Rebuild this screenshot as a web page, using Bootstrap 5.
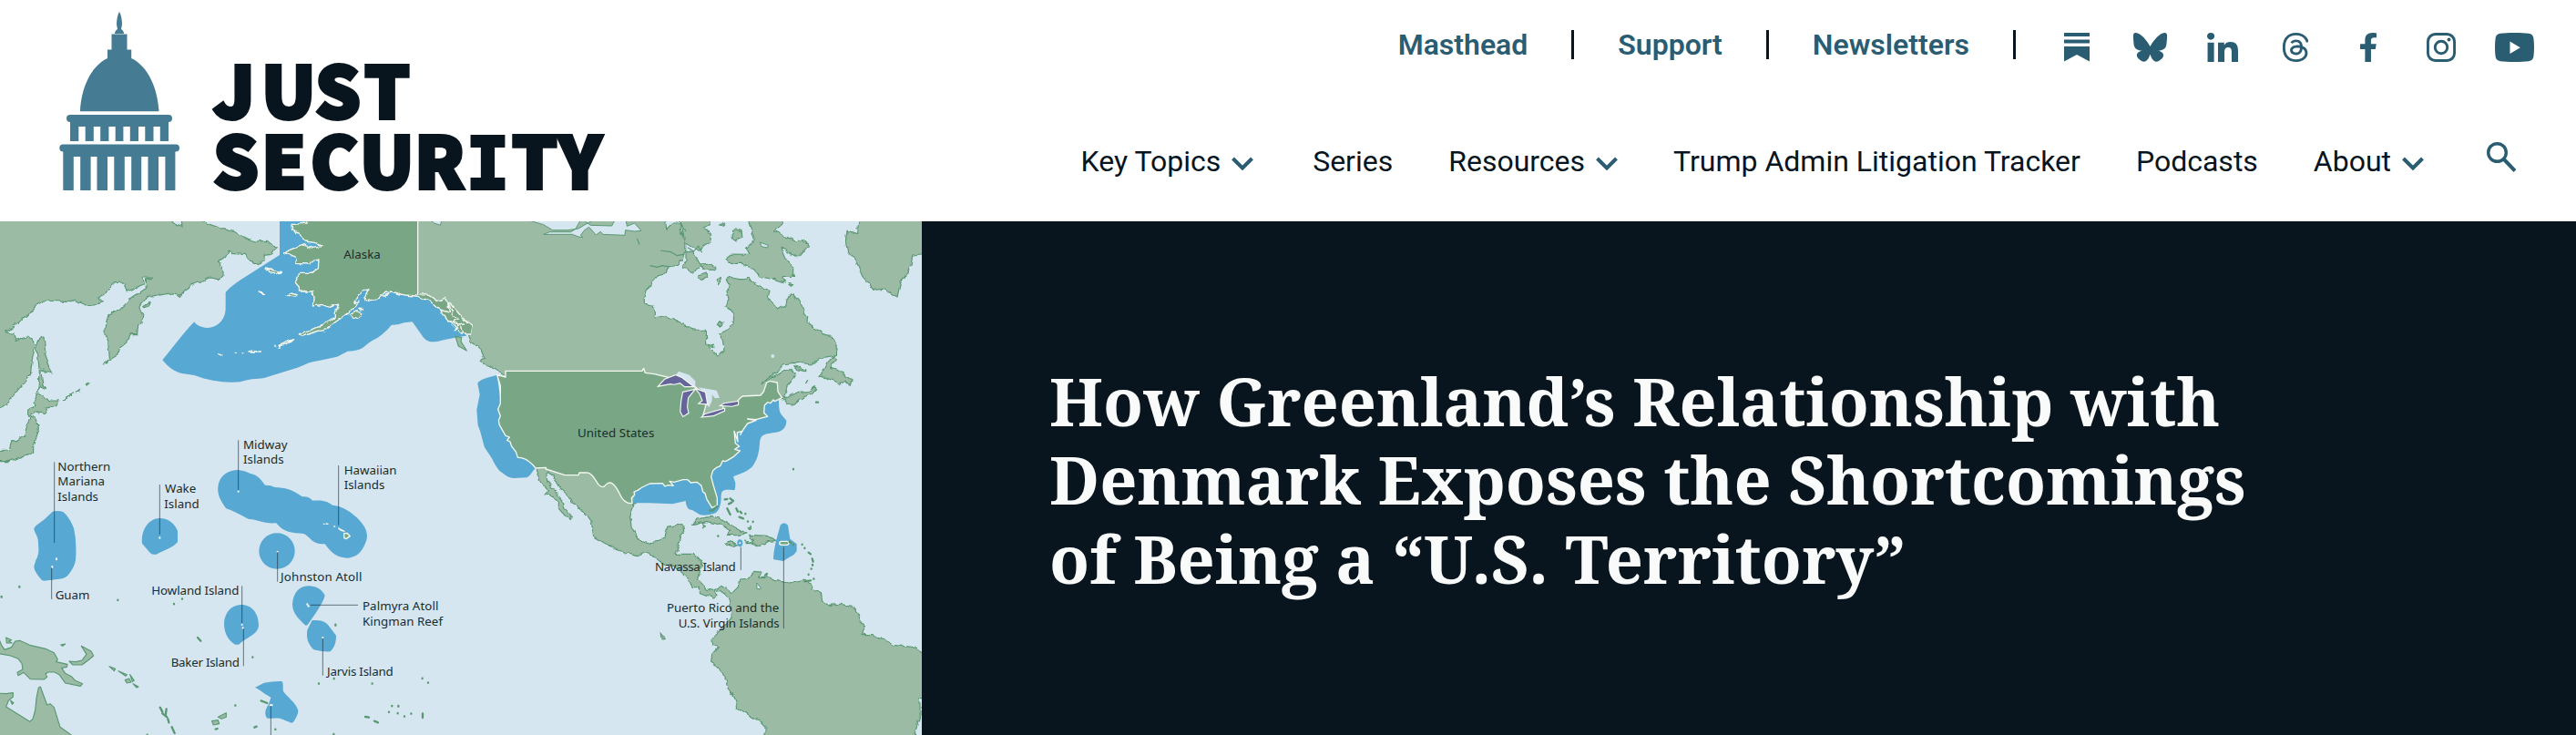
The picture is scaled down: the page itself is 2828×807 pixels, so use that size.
<!DOCTYPE html>
<html lang="en">

<head>
  <meta charset="UTF-8" />
  <meta name="viewport" content="width=device-width, initial-scale=1.0" />
  <title>Just Security</title>
  <link href="https://cdn.jsdelivr.net/npm/bootstrap@5.3.0/dist/css/bootstrap.min.css" rel="stylesheet" />
  <style>
    body {
      font-family: Roboto, "Liberation Sans", sans-serif;
      color: #08151e;
      background: #fff;
      overflow: hidden;
    }

    .site-header {
      height: 243px;
      padding-left: 65px;
    }

    .site-logo {
      width: 604px;
      height: 243px;
    }

    .logo-text {
      font-family: "Noto Sans CJK SC", "Noto Sans", sans-serif;
      font-size: 78px;
      font-weight: 900;
      fill: #08151e;
      stroke: #08151e;
      stroke-width: 4px;
    }

    .logo-slab {
      font-family: "DejaVu Sans Mono", monospace;
      font-weight: 700;
    }

    .top-links {
      height: 98px;
      padding-right: 28px;
      font-size: 32px;
      font-weight: 600;
      line-height: 1;
    }

    .top-links a {
      color: #2a5c72;
      text-decoration: none;
    }

    .divider {
      width: 3px;
      height: 32px;
      margin: 0 48px;
      background: #08151e;
    }

    .divider-last {
      margin-right: 27px;
    }

    .social-link {
      width: 80px;
      height: 32px;
      margin-top: 6px;
      display: flex;
      justify-content: center;
    }

    .social-link svg {
      height: 32px;
      fill: #2a5c72;
    }

    .main-menu {
      height: 145px;
      padding-top: 12px;
      padding-right: 66px;
      gap: 61px;
      font-size: 32px;
      line-height: 1;
    }

    .main-menu a {
      color: #08151e;
      text-decoration: none;
      white-space: nowrap;
    }

    .chevron {
      width: 24px;
      height: 15px;
      margin-left: 4px;
      fill: none;
      stroke: #2a5c72;
      stroke-width: 4;
    }

    .search-icon {
      width: 32px;
      height: 33px;
      margin-left: 8px;
      margin-bottom: 8px;
      fill: none;
      stroke: #2a5c72;
    }

    .hero {
      height: 564px;
      background: #08151e;
    }

    .hero-map {
      width: 1012px;
      height: 564px;
      flex: none;
    }

    .hero-title {
      margin: 3px 0 0 140px;
      color: #f9fbfa;
      font-family: "Noto Serif", "DejaVu Serif Condensed", "DejaVu Serif", serif;
      font-size: 72px;
      font-weight: 700;
      line-height: 86.4px;
      white-space: nowrap;
    }

    .land {
      fill: #9bbba5;
      stroke: #5a9873;
      stroke-width: 3.5;
      stroke-linejoin: round;
    }

    .speck {
      fill: none;
      stroke: #5a9873;
      stroke-width: 7;
      stroke-linecap: round;
    }

    .water {
      fill: #d6e6f0;
      stroke: #5a9873;
      stroke-width: 3;
    }

    .us {
      fill: #79a786;
      stroke: #f4f8f0;
      stroke-width: 4;
      stroke-linejoin: round;
    }

    .zone {
      fill: #57a8d2;
    }

    .lake {
      fill: #65659b;
      stroke: #f4f8f0;
      stroke-width: 7;
      paint-order: stroke;
    }

    .leader {
      fill: none;
      stroke: #17272e;
      stroke-opacity: .6;
      stroke-width: 3;
    }

    .map-label {
      font-family: "Noto Sans", sans-serif;
      font-size: 40px;
      fill: #202b2b;
    }
  </style>
</head>

<body>
  <header class="site-header d-flex justify-content-between">
    <a href="#" aria-label="Just Security">
      <svg class="site-logo d-block" viewBox="65 0 604 243">
        <g fill="#457c93">
          <path d="M131 13c2 3 3 9 3 14l-1 5c2 1 3 3 3 5h-10c0-2 1-4 3-5l-1-5c0-5 1-11 3-14zM122.500 37.500h17v17h4.700v9.500c19 9 29 34 30.300 58.300H88C89 98 99 73 118 64v-9.500h4.500z" />
          <path d="M77 126h108a4 4 0 0 1 0 8v21h-9.200v-16h-7.300v16h-9.200v-16H152v16h-9.200v-16h-7.400v16h-8.700v-16h-7.300v16h-9.200v-16h-7.400v16h-9.100v-16h-7.400v16H77v-21a4 4 0 0 1 0-8z" />
          <path d="M69 158.500h124a4 4 0 0 1 0 8h-.6V209h-11v-37H174v37h-11.500v-37h-7.300v37h-11v-37h-7.400v37h-11.500v-37H118v37h-11.500v-37h-6.900v37H88.200v-37h-7.400v37H69.300v-42.500a4 4 0 0 1 0-8z" />
        </g>
        <g class="logo-text">
          <text y="130" x="234 287 346 400">JUST</text>
          <text y="206.500" x="234 287 341 395 455">SECUR</text>
          <text class="logo-slab" y="206.500" x="512">I</text>
          <text y="206.500" x="562 613">TY</text>
        </g>
      </svg>
    </a>

    <div class="d-flex flex-column align-items-end">
      <div class="top-links d-flex align-items-center">
        <a href="#">Masthead</a>
        <span class="divider"></span>
        <a href="#">Support</a>
        <span class="divider"></span>
        <a href="#">Newsletters</a>
        <span class="divider divider-last"></span>
        <a class="social-link" href="#" aria-label="Substack">
          <svg width="28" viewBox="0 0 28 32"><path d="M0 0h28v4H0zM0 7.500h28v4H0zM0 15h28v16.500L14 24 0 31.500z" /></svg>
        </a>
        <a class="social-link" href="#" aria-label="Bluesky">
          <svg width="37" viewBox="0 0 576 512" preserveAspectRatio="none"><path d="M123.600 34.500C190.200 84.200 261.800 185 288 239.100c26.200-54.100 97.800-154.900 164.400-204.600 48-35.900 125.900-63.600 125.900 24.700 0 17.600-10.200 148.200-16.200 169.400-20.700 73.600-96.200 92.400-163.300 81 117.300 19.900 147.200 85.700 82.700 151.500-122.400 125-175.900-31.400-189.600-71.500-3.300-9.700-3.600-9.600-3.900 0-.3-9.600-.6-9.700-3.900 0-13.700 40.100-67.200 196.500-189.600 71.500-64.500-65.800-34.600-131.600 82.700-151.500-67.100 11.400-142.600-7.400-163.300-81C7.900 207.400-2.300 76.800-2.300 59.200c0-88.300 77.900-60.600 125.900-24.700z" /></svg>
        </a>
        <a class="social-link" href="#" aria-label="LinkedIn">
          <svg width="34" viewBox="0 0 448 448" preserveAspectRatio="none"><path d="M100.300 448H7.400V148.900h92.900zM53.800 108.100C24.100 108.100 0 83.500 0 53.800a53.800 53.800 0 0 1 107.600 0c0 29.700-24.100 54.300-53.800 54.300zM447.900 448h-92.700V302.400c0-34.700-.7-79.200-48.300-79.200-48.300 0-55.700 37.700-55.700 76.700V448h-92.800V148.900h89.100v40.800h1.300c12.400-23.500 42.700-48.300 87.900-48.300 94 0 111.300 61.900 111.300 142.300V448z" /></svg>
        </a>
        <a class="social-link" href="#" aria-label="Threads">
          <svg width="28" viewBox="18 16 400 480" preserveAspectRatio="none"><path d="M331.500 235.700c2.200.9 4.200 1.900 6.300 2.800 29.200 14.100 50.600 35.200 61.800 61.400 15.700 36.500 17.200 95.800-30.300 143.200-36.200 36.200-80.300 52.500-142.600 53h-.3c-70.200-.5-124.100-24.100-160.400-70.200-32.300-41-48.900-98.100-49.500-169.600v-.5c.5-71.500 17.100-128.600 49.400-169.600C102.200 40.100 156.200 16.500 226.400 16h.3c70.300.5 124.900 24 162.300 69.900 18.400 22.700 32 50 40.600 81.700l-40.400 10.800c-7.100-25.800-17.800-47.800-32.200-65.400-29.200-35.800-73-54.200-130.500-54.600-57 .5-100.100 18.800-128.200 54.400C72.100 146.100 58.500 194.300 58 256c.5 61.700 14.100 109.900 40.300 143.300 28 35.600 71.200 53.900 128.200 54.400 51.400-.4 85.400-12.600 113.700-40.900 32.300-32.200 31.700-71.800 21.400-95.900-6.100-14.200-17.100-26-31.900-34.900-3.700 26.900-11.800 48.300-24.700 64.800-17.100 21.800-41.400 33.600-72.700 35.300-23.600 1.300-46.300-4.400-63.900-16-20.800-13.800-33-34.800-34.300-59.300-2.500-48.300 35.700-83 95.200-86.400 21.100-1.200 40.900-.3 59.200 2.800-2.400-14.800-7.300-26.600-14.600-35.200-10-11.700-25.600-17.700-46.200-17.800h-.7c-16.600 0-39 4.600-53.300 26.300l-34.400-23.600c19.200-29.100 50.300-45.100 87.800-45.100h.8c62.600.4 99.900 39.500 103.700 107.700zm-156 68.800c1.300 25.100 28.400 36.800 54.600 35.300 25.600-1.400 54.600-11.400 59.500-73.200-13.200-2.900-27.800-4.400-43.400-4.400-4.800 0-9.600.1-14.400.4-42.900 2.400-57.200 23.200-56.200 41.800z" /></svg>
        </a>
        <a class="social-link" href="#" aria-label="Facebook">
          <svg width="18" viewBox="22 0 275 512" preserveAspectRatio="none"><path d="M279.100 288l14.200-92.700h-88.900v-60.100c0-25.300 12.400-50 52.200-50h40.400V6.300S260.400 0 225.400 0c-73.200 0-121 44.400-121 124.700v70.600H22.900V288h81.500v224h100.200V288z" /></svg>
        </a>
        <a class="social-link" href="#" aria-label="Instagram">
          <svg width="32" viewBox="0 0 32 32"><path fill-rule="evenodd" d="M9.500 0h13A9.500 9.500 0 0 1 32 9.500v13a9.500 9.500 0 0 1-9.500 9.500h-13A9.500 9.500 0 0 1 0 22.500v-13A9.500 9.500 0 0 1 9.500 0zm.3 2.900a6.900 6.900 0 0 0-6.900 6.900v12.400a6.900 6.900 0 0 0 6.900 6.900h12.400a6.900 6.900 0 0 0 6.900-6.900V9.800a6.900 6.900 0 0 0-6.900-6.900zM16 7.800a8.200 8.200 0 1 1 0 16.400 8.200 8.200 0 0 1 0-16.400zm0 2.900a5.300 5.300 0 1 0 0 10.600 5.300 5.300 0 0 0 0-10.600z" /><circle cx="24.500" cy="7.500" r="1.900" /></svg>
        </a>
        <a class="social-link" href="#" aria-label="YouTube">
          <svg width="43" viewBox="0 0 43 32"><path fill-rule="evenodd" d="M6 .8C13-.2 30-.2 37 .8c3.500.5 5 2.200 5.400 5.200.8 6 .8 14 0 20-.4 3-1.900 4.700-5.400 5.200-7 1-24 1-31 0C2.500 30.700 1 29 .6 26c-.8-6-.8-14 0-20C1 3 2.500 1.300 6 .8zM16.500 9.500v13.500l11.300-6.700z" /></svg>
        </a>
      </div>

      <nav class="main-menu d-flex align-items-center">
        <a class="me-1" href="#">Key Topics <svg class="chevron" viewBox="0 0 24 15"><path d="M1.500 2 12 12.500 22.500 2" /></svg></a>
        <a href="#">Series</a>
        <a href="#">Resources <svg class="chevron" viewBox="0 0 24 15"><path d="M1.500 2 12 12.500 22.500 2" /></svg></a>
        <a href="#">Trump Admin Litigation Tracker</a>
        <a href="#">Podcasts</a>
        <a href="#">About <svg class="chevron" viewBox="0 0 24 15"><path d="M1.500 2 12 12.500 22.500 2" /></svg></a>
        <svg class="search-icon" viewBox="0 0 32 33"><circle cx="11.500" cy="11.500" r="9.800" stroke-width="3.400" /><path d="M18.500 18.500 31 31.500" stroke-width="4" /></svg>
      </nav>
    </div>
  </header>

  <main class="hero d-flex align-items-center">
    <svg class="hero-map" viewBox="0 9 3036 1692">
      <defs>
        <!-- breaks up the coastlines a little -->
        <filter id="coast" filterUnits="userSpaceOnUse" x="-30" y="-30" width="3100" height="1780">
          <feTurbulence type="fractalNoise" baseFrequency=".045" numOctaves="2" seed="4" />
          <feDisplacementMap in="SourceGraphic" scale="16" xChannelSelector="R" yChannelSelector="G" />
        </filter>
      </defs>
      <rect y="9" width="3036" height="1692" fill="#d6e6f0" />

      <!-- Asia -->
      <g class="land" filter="url(#coast)">
        <path d="M-20-20H500L580 20 600 25 595-10H610L735 35 775 45 820 68 840 75 880 73 910 98 890 115 870 118 872 140 850 148 820 138 805 118 765 115 752 100 755 115 720 142 735 175 735 190 720 200 690 195 635 218 610 235 590 258 575 245 535 250 505 258 490 255 475 270 455 295 470 315 468 345 455 350 452 380 430 380 415 410 395 425 390 450 362 466 355 400 345 380 347 340 370 305 390 305 430 265 480 230 482 200 500 195 470 195 475 215 420 240 410 210 380 212 325 262 340 275 325 280 280 285 245 268 235 275 145 270 120 285 90 320 20 375 45 380 50 400 90 390 118 410 105 470 100 515 20 612-20 635z" />
        <path d="M133 385 145 395 150 450 172 510 135 500 140 540 152 560 135 550 125 570 130 500 125 450 118 430z" />
        <path d="M123 575 165 600 192 600 185 615 150 625 148 645 120 635 92 650 92 630 110 622z" />
        <path d="M100 650 120 660 127 690 110 745 110 770 30 800 0 800-20 765 30 762 40 730 50 735 80 715 90 680z" />
        <path d="M470 290 492 275 490 288 475 293zM340 480 358 465 352 477zM205 597 238 573 232 582zM247 573 266 560 262 570zM283 547 294 541 290 549z" />
      </g>

      <!-- New Guinea and Australia -->
      <g class="land" transform="translate(0 780)">
        <path d="M-10 590 5 625 15 640 38 632 50 612 65 610 98 625 150 637 178 650 190 672 185 680 222 688 220 697 203 700 215 718 235 728 248 742 272 752 265 760 215 750 195 722 180 714 158 714 150 720 155 730 145 738 100 737 78 715 60 725 57 715 75 705 72 685 60 670 35 660-10 652zM-10 783 20 785 43 782 43 795 28 808 20 828 98 877 108 868 116 840 120 800 127 765 133 762 155 822 165 818 178 830 198 895 240 925-10 925z" />
        <path d="M228 678 250 680 270 675 285 655 268 628 300 645 308 660 290 675 270 690 240 690zM20 600 38 608 28 612 40 618 22 618zM200 624 215 621 206 628zM360 695 380 703 376 710zM390 710 418 722 414 727zM412 740 425 735 432 747 418 750zM428 722 442 742 436 745zM438 752 456 762 450 765z" />
        <path d="M698 875 718 872 722 884 703 888zM718 862 745 848 745 862 730 868zM35 808 45 815 40 820z" />
        <path class="speck" d="M527 830 535 845M548 835 545 858M535 850 550 862M553 868 556 880M566 895 575 915M860 808 880 816M1203 861 1215 863M1233 875 1245 880M1392 850v14M1410 748v1M1391 734v1M838 896 845 893M907 902v1M710 902 716 900M1105 557v3M651 600 661 611" />
        <path class="speck" stroke-width="5" d="M64 432v2M5 465v2M388 476v1M573 489v1M600 472v1M832 664v1M1050 751v1M1100 735v1M1226 751v1M775 823v1M1291 825v1M1312 825v2M1281 845v1M1310 849v1M1332 859v1M1354 850v1M1099 918v1M485 920v1" />
      </g>

      <!-- Americas -->
      <g class="land" filter="url(#coast)">
        <g transform="translate(1500 0)">
          <path d="M-124-20H690L695 35 715 15 735 15 740 40 757 65 755 100 760 110 750 122 748 135 735 150 715 157 700 158 690 180 665 185 650 205 637 225 625 245 625 280 650 285 658 305 658 327 690 320 720 330 745 350 770 358 780 366 826 367 827 410 845 432 862 452 885 435 880 400 866 380 900 365 915 345 917 325 908 300 888 290 900 265 893 235 905 220 892 200 905 192 930 200 955 200 965 195 985 212 1000 225 1035 235 1030 262 1040 275 1062 300 1088 285 1092 270 1100 252 1110 248 1125 265 1140 285 1148 310 1160 325 1158 340 1190 365 1210 380 1232 385 1250 408 1257 430 1255 450 1210 457 1170 480 1150 477 1110 475 1080 480 1060 505 1025 530 1008 548 1040 525 1080 500 1105 497 1120 510 1110 530 1095 550 1085 575 1085 588 1120 575 1160 572 1180 552 1190 560 1180 572 1165 580 1140 592 1110 612 1090 610 1083 595 1060 597 585 938 575 985 580 1015 600 1055 630 1070 670 1062 690 1045 697 1018 750 1010 755 1022 740 1045 735 1080 722 1105 780 1105 812 1122 805 1160 800 1190 830 1222 850 1225 875 1210 912 1233 930 1215 935 1188 965 1185 985 1165 1005 1168 998 1185 1010 1180 1035 1182 1055 1193 1100 1200 1150 1188 1170 1205 1175 1222 1205 1235 1208 1260 1230 1273 1270 1270 1300 1275 1325 1295 1335 1325 1350 1345 1335 1370 1375 1370 1380 1380 1415 1385 1440 1405 1510 1412 1560 1440V1577H1530V1635L1520 1670 1500 1730H1020V1675L1000 1655 930 1612 920 1580 900 1550 880 1500 855 1470 842 1462 845 1435 865 1412 848 1405 846 1385 860 1365 885 1340 910 1315 905 1260 885 1235 870 1225 850 1230 862 1243 850 1248 830 1240 805 1232 795 1215 780 1213 768 1190 720 1145 680 1135 650 1110 625 1100 600 1112 570 1105 520 1085 455 1048 448 1000 435 980 385 935 382 925 350 895 330 860 325 847 303 835 300 840 302 865 345 920 360 955 385 983 378 992 362 980 340 955 340 935 320 915 295 905 305 895 280 868 264 822 165 515 130 495 80 470 95 460 85 435 75 420 50 405 45 385 35 350-124 250z" />
          <!-- Arctic islands, Newfoundland, Greenland -->
          <path d="M730-10 755 40 740 15 755 80 800 103 840 75 842 55 820 30 838 20 835-10zM762 108 785 115 808 150 830 148 858 160 855 170 820 168 808 155 780 178 765 165 745 165 762 140zM800 190 825 180 830 190 812 202 800 198zM860 205 870 196 875 205 865 215zM910 50 920 35 942 40 945 60 925 72 910 65zM890 15 880 25 870 20z" />
          <path d="M955-20 985 70 958 98 970 118 910 117 888 135 900 148 940 148 965 160 985 170 1005 192 1050 200 1088 210 1075 190 1112 190 1112 160 1085 130 1070 95 1130 130 1165 85 1140 70 1120 75 1050 40 1075 20 1070-20z" />
          <path d="M1250 448 1255 465 1235 490 1255 495 1275 505 1285 520 1305 530 1300 550 1285 535 1265 548 1250 535 1200 518 1215 495 1225 475zM1115 485 1155 498 1150 503 1125 497zM1155 540 1163 533 1158 540zM1095 215 1112 218 1105 223zM862 350 870 338 881 345 875 355zM833 412 850 415 852 425 835 420z" />
          <path d="M1330-20 1325 50 1290 40 1285 75 1292 110 1320 140 1340 190 1380 235 1410 232 1455 258 1465 215 1500 155 1505 120 1560 115V-20z" />
          <!-- Caribbean -->
          <path d="M782 1010 795 990 840 982 870 990 920 1015 960 1038 925 1043 895 1042 905 1030 880 1010 825 997zM888 1070 900 1063 928 1073 912 1080zM950 1062 980 1065 968 1042 1025 1045 1055 1060 1025 1065 1000 1080 985 1070 955 1070zM812 1005 820 1010 815 1020zM963 1020 978 1016 970 1025zM675 1365 688 1382 678 1383z" />
        </g>
      </g>
      <g transform="translate(1500 0)">
        <path class="speck" d="M887 925 895 924M905 922 915 930M910 935 900 940M895 955 905 975M925 955 930 965M938 965 942 970M955 972v1M935 983 948 988M963 997v1M980 998v1M865 1045v1M1113 825v1M1188 605h6M1142 1073v1M1150 1085v1M1163 1100 1170 1105M1175 1120 1178 1130M1176 1140v2M1172 1153v1M1163 1172v1M1180 1186v1M1020 1175 1026 1170M1150 1195 1170 1192" />
        <path class="water" d="M205-5 290 20 320 38 370 38 405 33 435 15 455 5 300-5zM415 0 445 22 515 24 530-5 560-5 565 25 590 15 612 40 590 42 560 38 558 55 485 52 478 43 463 54 440 28 425 38 412 55 420 62 405 60 385 52 290 52 310 44 380 44 395 35zM1003 78 1030 88 1028 96 1008 92zM992 1200 1005 1215 1005 1220 993 1220z" />
        <path class="land" fill-opacity="0" d="M675 105 710 110 730 122 750 118M640 155 665 160 680 155 700 158M598 65 606 85M765 95 785 108 800 90 812 112" />
        <circle cx="1045" cy="453" r="6" fill="#d6e6f0" />
        <path class="zone" d="M137 515C100 525 80 530 73 542L80 580 70 630 74 680C90 720 90 745 100 760L120 790C130 810 140 830 155 838Q175 855 190 855L235 853C250 845 250 835 264 822L210 760 160 680zM1065 595C1065 640 1068 640 1090 665Q1090 700 1050 705C1010 710 1005 715 1002 740Q1000 790 975 820C950 840 935 840 915 850L922 870Q922 895 918 895C880 890 876 895 875 915Q875 965 850 972C830 978 815 978 805 975L780 960Q760 960 758 930L715 940 640 937H582L600 880 760 830 850 820 960 610z" />
        <path class="us" d="M165 502H615L620 493 625 508 655 512 710 525 725 517 788 552 800 563 822 572 828 590 826 610 815 650 850 645 880 632 882 617 925 612 932 597 945 585 1005 582 1015 570 1025 540 1035 535 1060 540 1062 570 1075 590 1052 602 1047 597 1038 608 1028 605 1018 615 1016 640 1028 652 1015 655 990 662 962 660 990 665 962 675 948 695 938 712 945 700 928 705 930 735 918 700 922 740 935 750 920 760 937 765 915 785 890 800 880 798 872 815 860 820 848 830 842 850 850 880 862 920 862 945 845 952 828 925 822 905 815 900 810 880 795 868 775 870 765 860 750 860 720 868 705 865 718 880 700 878 690 882 682 872 640 873 615 885 600 895 588 900 590 910 580 920 582 938Q555 940 540 905C525 875 510 860 495 877Q485 892 470 875C455 850 445 835 430 837H408L405 845H360L298 825V820L264 822Q235 785 205 787L200 770 185 750 180 735 170 730 178 720 165 715 145 680 142 665 148 650 140 628 148 610 148 550 137 515 165 522z" />
        <path fill="#d6e6f0" d="M725 517 735 503 770 515 790 535 790 555zM800 556 860 566 870 590 855 592 845 580 845 600 835 622 826 610 822 573z" />
        <path class="lake" d="M672 550 690 530 725 517 745 525 780 552 755 552 740 540 720 545 708 543 672 550zM750 573 785 565 765 590 762 620 766 640 750 650 742 635 745 600zM795 563 822 573 828 610 805 608 815 600 805 575zM815 652 822 645 885 627 885 632 850 648zM877 615 885 610 930 603 930 612 910 617z" />
        <!-- Puerto Rico, Navassa -->
        <path class="zone" d="M1070 1010Q1082 995 1095 1010L1102 1055 1124 1072V1095Q1115 1110 1100 1115L1080 1128 1048 1123Q1045 1115 1055 1065z" />
        <rect class="us" x="1067" y="1063" width="31" height="12" rx="7" />
        <path class="speck" d="M1100 1065 1105 1068M1113 1073v2M838 962 850 960M850 958 862 948" />
        <ellipse class="zone" cx="937" cy="1069" rx="9" ry="12" />
        <circle cx="937" cy="1069" r="3" fill="#fff" />
      </g>

      <!-- Alaska -->
      <path class="zone" d="M921-20V120L790 203Q755 227 743 243V300C740 340 710 360 680 360 655 358 642 345 640 340Q625 355 600 385L535 466C555 490 575 505 600 510L640 516C690 535 740 542 790 538 830 525 860 528 870 525L940 503C1010 485 1000 475 1050 468L1110 455 1145 437C1200 437 1200 415 1230 400Q1260 385 1290 350 1310 352 1330 343L1358 340 1395 392Q1410 410 1440 405 1500 390 1545 385V200H1376V-20z" />
      <path class="land" d="M1500 388 1520 392 1518 405 1537 435 1510 420z" />
      <path fill="#9bbba5" d="M1376 9V250L1405 248 1440 272 1465 262 1500 300 1540 345 1555 360 1560 380V9z" />
      <path d="M1405-5 1430 15 1450 22 1458-5z" fill="#d6e6f0" stroke="#5a9873" stroke-width="3" />
      <g filter="url(#coast)">
        <path class="us" d="M1010-10 1012 15 960 20 962 38 985 50 1005 75 1040 80 1062 92 1030 97 1005 85 965 100 935 113 975 132 975 148 1020 150 1035 135 1050 138 1048 165 1025 178 990 178 972 210 985 225 985 240 1028 240 1032 260 1030 288 1060 283 1085 292 1115 282 1105 310 1105 325 1075 340 1060 352 1030 365 985 380 995 388 1040 372 1075 362 1120 330 1150 310 1170 290 1185 270 1165 278 1190 240 1215 230 1200 260 1205 273 1250 262 1265 245 1290 240 1330 252 1376 255 1420 275 1450 300 1470 330 1490 350 1520 378 1550 378 1555 350 1540 345 1500 300 1465 262 1440 272 1405 248 1370 250V-20z" />
        <path class="us" d="M945 252 960 246 977 252 970 258zM873 165 925 175 912 182 878 173zM852 243 870 247 860 247zM1150 318 1175 305 1193 312 1190 320 1165 330zM1182 295 1195 295 1188 302zM920 420 945 405 965 398 950 410 925 420zM816 438 835 433 856 438zM720 446 732 450zM775 442h3zM797 443h3zM905 420h3zM1262 255 1278 248 1270 258zM1065 373h3zM1000 238h8z" />
        <path d="M1450 300 1480 310 1475 275 1495 320 1510 330 1490 340 1520 350 1525 375M1470 330 1500 350 1530 345M1500 370 1510 350" fill="none" stroke="#f4f8f0" stroke-width="4" />
      </g>
      <path d="M1360 9H1376V248H1360z" fill="#79a786" />
      <path d="M1376 9V250" stroke="#f4f8f0" stroke-width="4" />

      <!-- Pacific territories -->
      <g transform="translate(0 780)">
        <path class="zone" d="M173 185Q190 180 208 186C225 200 238 225 243 240Q250 270 250 300 252 350 243 365 225 400 210 404C180 410 160 410 145 413L138 411C125 395 112 380 112 365L118 345C130 325 127 310 126 290 127 265 112 255 112 240L118 232Q150 210 173 185zM526 207C555 207 575 225 585 248V285C570 305 540 312 515 326Q502 328 495 322L468 290C464 245 490 207 526 207z" />
        <path class="zone" d="M785 48Q805 50 825 60C850 65 860 80 873 98Q890 97 905 105C940 107 960 110 995 136Q1015 133 1030 149C1065 147 1075 150 1095 164 1130 165 1180 200 1200 235Q1215 260 1205 285C1190 325 1170 335 1145 338 1110 338 1090 320 1070 292 1025 293 1025 270 1000 258 960 255 935 255 910 223 860 225 850 210 820 210 790 195 775 185 745 175 730 155 715 130 718 105 720 70 750 48 785 48z" />
        <circle class="zone" cx="912" cy="315" r="59" />
        <path class="zone" d="M1015 430C1040 430 1062 442 1070 462 1065 485 1030 535 1013 558Q1007 562 1003 557C985 540 963 520 963 490 965 455 985 430 1015 430zM1028 543C1050 542 1070 545 1080 558L1107 593C1107 615 1103 630 1088 646Q1060 648 1033 640C1015 620 1008 605 1012 575zM795 492C830 492 852 520 852 560 850 590 810 600 790 620Q780 627 770 620C745 605 738 575 738 553 740 515 765 492 795 492zM840 764 870 749Q900 743 928 744C935 750 930 765 933 777 945 795 975 815 982 840Q983 855 965 880 958 884 950 877C930 870 925 863 900 866H880C868 850 875 835 885 820L892 797C870 785 860 775 840 764z" />
        <path class="us" d="M1133 257 1143 256 1153 266 1140 275 1133 272zM1115 240 1122 246 1134 250zM1066 226h2zM1074 225 1080 226zM1100 234h3z" stroke-width="3" />
        <path d="M785 118v1M526 271v1M914 317v1M186 340v3M172 366v3M1012 490v1M1016 496v1M797 557v1M800 568v1M1063 600v1M890 823h6" fill="none" stroke="#fff" stroke-width="6" stroke-linecap="round" />
        <path class="leader" d="M179 22V288M170 370V474M526 96V261M785-50V115M1115 33V230M914 318V416M797 430V552M802 570V694M1022 493H1179M1063 602V725M892 825V925M2440 302V378M2581 302V570" />
        <g class="map-label">
          <text x="190" y="51">Northern</text>
          <text x="190" y="100">Mariana</text>
          <text x="190" y="150">Islands</text>
          <text x="182" y="475">Guam</text>
          <text x="543" y="124">Wake</text>
          <text x="541" y="174">Island</text>
          <text x="801" y="-21">Midway</text>
          <text x="801" y="28">Islands</text>
          <text x="1133" y="62">Hawaiian</text>
          <text x="1133" y="112">Islands</text>
          <text x="924" y="415" textLength="268">Johnston Atoll</text>
          <text x="499" y="459" textLength="288">Howland Island</text>
          <text x="1194" y="510" textLength="250">Palmyra Atoll</text>
          <text x="1194" y="560" textLength="264">Kingman Reef</text>
          <text x="563" y="696" textLength="226">Baker Island</text>
          <text x="1077" y="727" textLength="218">Jarvis Island</text>
          <text x="2157" y="381" textLength="266">Navassa Island</text>
          <text x="2196" y="516" textLength="370">Puerto Rico and the</text>
          <text x="2234" y="566" textLength="333">U.S. Virgin Islands</text>
          <text x="1132" y="-647">Alaska</text>
          <text x="1902" y="-60" textLength="253">United States</text>
        </g>
      </g>
    </svg>

    <h1 class="hero-title">How Greenland’s Relationship with<br>Denmark Exposes the Shortcomings<br>of Being a “U.S. Territory”</h1>
  </main>

  <script src="https://cdn.jsdelivr.net/npm/bootstrap@5.3.0/dist/js/bootstrap.bundle.min.js"></script>
</body>

</html>
